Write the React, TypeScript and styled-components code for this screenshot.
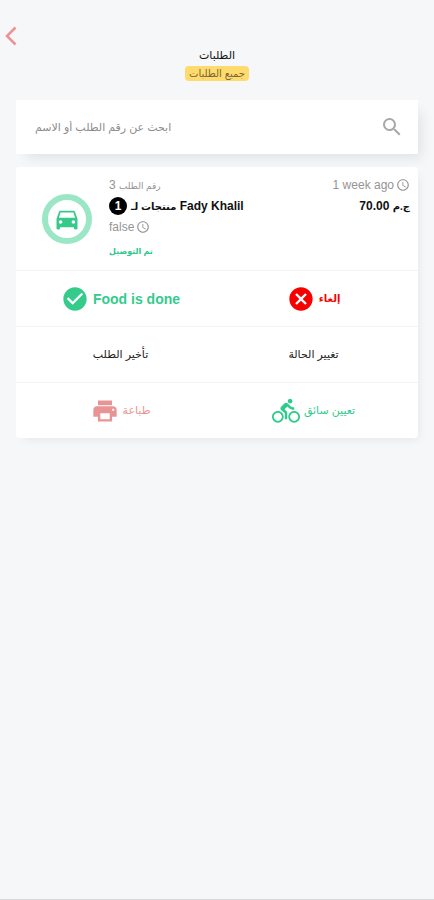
import React from "react";
import styled, { createGlobalStyle } from "styled-components";
import {
  MdAccessTime,
  MdCancel,
  MdCheckCircle,
  MdDirectionsBike,
  MdDirectionsCar,
  MdPrint,
  MdSearch,
} from "react-icons/md";

const GlobalStyle = createGlobalStyle`
  * { box-sizing: border-box; }
  body {
    margin: 0;
    background: #f5f7f9;
    color: #111;
    font-family: "Liberation Sans", "DejaVu Sans", sans-serif;
    font-size: 12px;
  }
  button, input { font-family: inherit; }
`;

const Page = styled.main`
  min-height: 100vh;
  display: flex;
  flex-direction: column;
  padding: 24px 16px;
  border-bottom: 1px solid #d6d8d9;
`;

const BackButton = styled.button`
  display: flex;
  align-self: flex-start;
  margin-left: -12px;
  padding: 0;
  border: 0;
  background: none;
  color: #ec9292;
  cursor: pointer;
`;

const Heading = styled.header`
  display: flex;
  flex-direction: column;
  align-items: center;
  gap: 4px;
`;

const Title = styled.h1`
  margin: 0;
  font-size: 11px;
  line-height: 14px;
  font-weight: 400;
`;

const Tag = styled.span`
  padding: 0 4px;
  border-radius: 4px;
  background: #ffda6c;
  color: #75663a;
  font-size: 10px;
  line-height: 15px;
`;

const SearchBar = styled.label`
  display: flex;
  align-items: center;
  height: 54px;
  margin: 19px 0 13px;
  padding: 0 14px 0 19px;
  background: #fff;
  box-shadow: 7px 8px 12px -4px rgba(0, 0, 0, 0.09);
  color: #a8a8a8;
`;

const SearchInput = styled.input`
  flex: 1;
  min-width: 0;
  height: 24px;
  padding: 0;
  border: 0;
  outline: 0;
  background: none;
  color: #333;
  font-size: 11px;
  line-height: 24px;
  &::placeholder { color: #8c8c8c; opacity: 1; line-height: 24px; }
`;

const Card = styled.article`
  border-radius: 4px;
  background: #fff;
  box-shadow: 4px 5px 10px -4px rgba(0, 0, 0, 0.08);
`;

const Summary = styled.section`
  display: flex;
  height: 103px;
  padding: 9px 8px 8px 26px;
`;

const Ring = styled.div`
  display: flex;
  align-items: center;
  justify-content: center;
  flex: none;
  width: 50px;
  height: 50px;
  margin: 18px 17px 0 0;
  border: 6px solid #9be7c5;
  border-radius: 50%;
  color: #35c98a;
`;

const Details = styled.div`
  flex: 1;
  min-width: 0;
`;

const Price = styled.div`
  display: flex;
  flex-direction: column;
  align-items: flex-end;
`;

const Line = styled.div<{ $strong?: boolean }>`
  display: flex;
  align-items: center;
  gap: ${(p) => (p.$strong ? 4 : 2)}px;
  height: ${(p) => (p.$strong ? 24 : 18)}px;
  color: ${(p) => (p.$strong ? "#111" : "#949494")};
  font-size: 12px;
  font-weight: ${(p) => (p.$strong ? 700 : 400)};
  white-space: nowrap;
`;

const Arabic = styled.span<{ $small?: boolean }>`
  font-size: ${(p) => (p.$small ? 9 : 10)}px;
`;

const Count = styled.span`
  display: flex;
  align-items: center;
  justify-content: center;
  width: 18px;
  height: 18px;
  border-radius: 50%;
  background: #000;
  color: #fff;
`;

const Status = styled.p`
  margin: 8px 0 0;
  color: #2cc98a;
  font-size: 8px;
  line-height: 16px;
  font-weight: 700;
`;

const Actions = styled.div`
  display: grid;
  grid-template-columns: 1fr 1fr;
  height: 56px;
  padding: 0 8px;
  border-top: 1px solid #f3f3f3;
`;

const Action = styled.button<{ $color: string; $size?: number; $bold?: boolean }>`
  display: flex;
  align-items: center;
  justify-content: center;
  gap: 4px;
  padding: 0 8px;
  border: 0;
  background: none;
  color: ${(p) => p.$color};
  font-size: ${(p) => p.$size ?? 11}px;
  font-weight: ${(p) => (p.$bold ? 700 : 400)};
  cursor: pointer;
`;

const Chevron = () => (
  <svg width="14" height="24" viewBox="0 0 14 24" fill="none" aria-hidden="true">
    <path d="M11.500 3.500 3 12l8.500 8.500" stroke="currentColor" strokeWidth="2.500" />
  </svg>
);

export default function App() {
  return (
    <>
      <GlobalStyle />
      <Page>
        <BackButton type="button" aria-label="رجوع">
          <Chevron />
        </BackButton>
        <Heading>
          <Title>الطلبات</Title>
          <Tag>جميع الطلبات</Tag>
        </Heading>
        <SearchBar>
          <SearchInput type="text" placeholder="ابحث عن رقم الطلب أو الاسم" aria-label="ابحث عن رقم الطلب أو الاسم" />
          <MdSearch size={24} />
        </SearchBar>
        <Card>
          <Summary>
            <Ring>
              <MdDirectionsCar size={28} />
            </Ring>
            <Details>
              <Line>
                <span><Arabic $small>رقم الطلب</Arabic> 3</span>
              </Line>
              <Line $strong>
                <Count>1</Count>
                <span><Arabic>منتجات لـ</Arabic> Fady Khalil</span>
              </Line>
              <Line>
                false <MdAccessTime size={14} />
              </Line>
              <Status>تم التوصيل</Status>
            </Details>
            <Price>
              <Line>
                1 week ago <MdAccessTime size={14} />
              </Line>
              <Line $strong>
                <span>70.00 <Arabic>ج.م</Arabic></span>
              </Line>
            </Price>
          </Summary>
          <Actions>
            <Action type="button" $color="#35cb8b" $size={14} $bold>
              <MdCheckCircle size={28} />
              Food is done
            </Action>
            <Action type="button" $color="#f80000" $size={10} $bold>
              <MdCancel size={28} />
              إلغاء
            </Action>
          </Actions>
          <Actions>
            <Action type="button" $color="#222">تأخير الطلب</Action>
            <Action type="button" $color="#222">تغيير الحالة</Action>
          </Actions>
          <Actions>
            <Action type="button" $color="#e99494">
              <MdPrint size={28} />
              طباعة
            </Action>
            <Action type="button" $color="#2ecb8a">
              <MdDirectionsBike size={28} />
              تعيين سائق
            </Action>
          </Actions>
        </Card>
      </Page>
    </>
  );
}
